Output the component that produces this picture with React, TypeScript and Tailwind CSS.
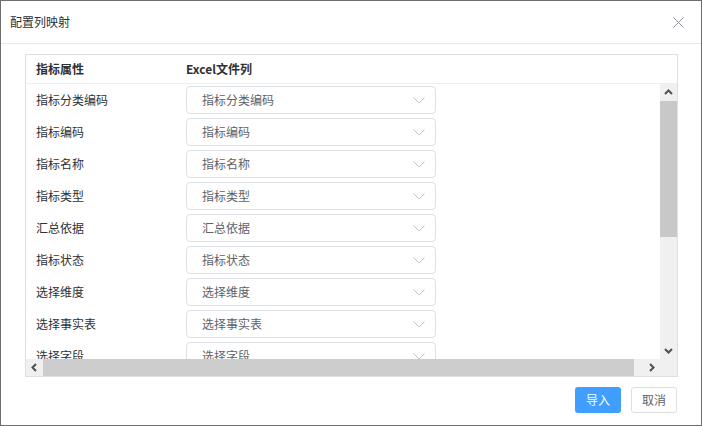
import React from 'react';

const rows = [
  '指标分类编码',
  '指标编码',
  '指标名称',
  '指标类型',
  '汇总依据',
  '指标状态',
  '选择维度',
  '选择事实表',
  '选择字段',
  '计算公式',
  '统计周期',
  '计量单位',
  '数据精度',
  '指标描述',
  '备注',
];

const Chevron = () => (
  <svg width="12" height="7" viewBox="0 0 12 7" className="shrink-0">
    <polyline points="0.5,0.5 6,6 11.5,0.5" fill="none" stroke="#c0c4cc" strokeWidth="1" />
  </svg>
);

// arrow glyph for the fake classic scrollbar
const Arrow = ({ dir }: { dir: 'up' | 'down' | 'left' | 'right' }) => {
  const pts = {
    up: '1,6 4.5,2.5 8,6',
    down: '1,3 4.5,6.5 8,3',
    left: '6,1 2.5,4.5 6,8',
    right: '3,1 6.5,4.5 3,8',
  }[dir];
  return (
    <svg width="9" height="9" viewBox="0 0 9 9">
      <polyline points={pts} fill="none" stroke="#505050" strokeWidth="2" />
    </svg>
  );
};

const App: React.FC = () => {
  return (
    <div
      className="w-[702px] h-[426px] bg-white border border-[#6e6e6e] flex flex-col text-[12px] overflow-hidden"
      style={{ fontFamily: '"Noto Sans CJK SC", "Liberation Sans", sans-serif' }}
    >
      {/* HEADER */}
      <div className="h-[43px] shrink-0 flex items-center justify-between pl-[9px] pr-[17px] border-b border-[#e8e8e8]">
        <span className="text-[12px] text-[#303133]">配置列映射</span>
        <svg width="11" height="11" viewBox="0 0 11 11">
          <path d="M0.5 0.5 L10.5 10.5 M10.5 0.5 L0.5 10.5" stroke="#909399" strokeWidth="1" />
        </svg>
      </div>

      {/* TABLE */}
      <div className="pt-[10px] pl-[24px]">
        <div className="w-[653px] border border-[#dcdfe6] flex flex-col">
          <div className="h-[29px] flex items-center border-b border-[#ebeef5] font-bold text-[#303133]">
            <div className="w-[160px] pl-[10px]">指标属性</div>
            <div>Excel文件列</div>
          </div>

          <div className="flex h-[275px]">
            <div className="flex-1 overflow-hidden">
              <div className="min-w-[644px]">
                {rows.map((r) => (
                  <div key={r} className="h-[32px] flex items-center">
                    <div className="w-[160px] pl-[10px] text-[#303133]">{r}</div>
                    <div className="w-[250px] h-[28px] border border-[#dcdfe6] rounded-[4px] flex items-center justify-between pl-[15px] pr-[10px] text-[#606266]">
                      <span>{r}</span>
                      <Chevron />
                    </div>
                  </div>
                ))}
              </div>
            </div>
            {/* vertical scrollbar */}
            <div className="w-[17px] bg-[#f0f0f0] flex flex-col">
              <div className="h-[17px] flex items-center justify-center">
                <Arrow dir="up" />
              </div>
              <div className="flex-1 flex flex-col">
                <div className="h-[136px] bg-[#c8c8c8]" />
              </div>
              <div className="h-[17px] flex items-center justify-center">
                <Arrow dir="down" />
              </div>
            </div>
          </div>

          {/* horizontal scrollbar */}
          <div className="flex h-[17px]">
            <div className="flex-1 bg-[#f0f0f0] flex">
              <div className="w-[17px] flex items-center justify-center">
                <Arrow dir="left" />
              </div>
              <div className="flex-1 flex">
                <div className="w-[591px] bg-[#cdcdcd]" />
              </div>
              <div className="w-[17px] flex items-center justify-center">
                <Arrow dir="right" />
              </div>
            </div>
            <div className="w-[17px] bg-[#f0f0f0]" />
          </div>
        </div>
      </div>

      {/* FOOTER */}
      <div className="flex justify-end gap-[10px] pt-[10px] pr-[24px]">
        <button className="w-[46px] h-[26px] rounded-[3px] bg-[#409eff] text-white text-[12px]">导入</button>
        <button className="w-[46px] h-[26px] rounded-[3px] border border-[#dcdfe6] bg-white text-[#606266] text-[12px]">取消</button>
      </div>
    </div>
  );
};

export default App;
